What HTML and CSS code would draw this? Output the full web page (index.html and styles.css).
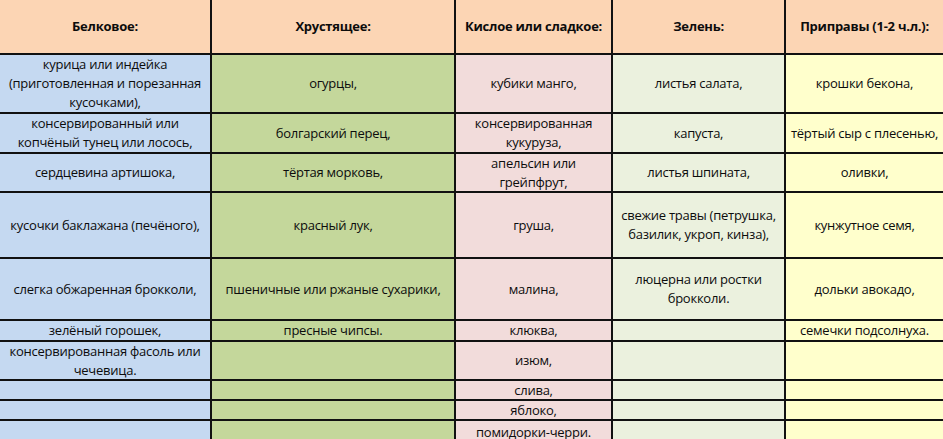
FILE: index.html
```html
<!DOCTYPE html>
<html lang="ru">
<head>
<meta charset="utf-8">
<title>Салат</title>
<link rel="stylesheet" href="styles.css">
</head>
<body>
<div class="sheet">
  <div class="cell head">Белковое:</div>
  <div class="cell head">Хрустящее:</div>
  <div class="cell head">Кислое или сладкое:</div>
  <div class="cell head">Зелень:</div>
  <div class="cell head">Приправы (1-2 ч.л.):</div>

  <div class="cell c1">курица или индейка<br>(приготовленная и порезанная<br>кусочками),</div>
  <div class="cell c2">огурцы,</div>
  <div class="cell c3">кубики манго,</div>
  <div class="cell c4">листья салата,</div>
  <div class="cell c5">крошки бекона,</div>

  <div class="cell c1">консервированный или<br>копчёный тунец или лосось,</div>
  <div class="cell c2">болгарский перец,</div>
  <div class="cell c3">консервированная<br>кукуруза,</div>
  <div class="cell c4">капуста,</div>
  <div class="cell c5">тёртый сыр с плесенью,</div>

  <div class="cell c1">сердцевина артишока,</div>
  <div class="cell c2">тёртая морковь,</div>
  <div class="cell c3">апельсин или<br>грейпфрут,</div>
  <div class="cell c4">листья шпината,</div>
  <div class="cell c5">оливки,</div>

  <div class="cell c1">кусочки баклажана (печёного),</div>
  <div class="cell c2">красный лук,</div>
  <div class="cell c3">груша,</div>
  <div class="cell c4">свежие травы (петрушка,<br>базилик, укроп, кинза),</div>
  <div class="cell c5">кунжутное семя,</div>

  <div class="cell c1">слегка обжаренная брокколи,</div>
  <div class="cell c2">пшеничные или ржаные сухарики,</div>
  <div class="cell c3">малина,</div>
  <div class="cell c4">люцерна или ростки<br>брокколи.</div>
  <div class="cell c5">дольки авокадо,</div>

  <div class="cell c1">зелёный горошек,</div>
  <div class="cell c2">пресные чипсы.</div>
  <div class="cell c3">клюква,</div>
  <div class="cell c4"></div>
  <div class="cell c5">семечки подсолнуха.</div>

  <div class="cell c1">консервированная фасоль или<br>чечевица.</div>
  <div class="cell c2"></div>
  <div class="cell c3">изюм,</div>
  <div class="cell c4"></div>
  <div class="cell c5"></div>

  <div class="cell c1"></div>
  <div class="cell c2"></div>
  <div class="cell c3">слива,</div>
  <div class="cell c4"></div>
  <div class="cell c5"></div>

  <div class="cell c1"></div>
  <div class="cell c2"></div>
  <div class="cell c3">яблоко,</div>
  <div class="cell c4"></div>
  <div class="cell c5"></div>

  <div class="cell c1"></div>
  <div class="cell c2"></div>
  <div class="cell c3">помидорки-черри.</div>
  <div class="cell c4"></div>
  <div class="cell c5"></div>
</div>
</body>
</html>
```
FILE: styles.css
```css
html, body {
  margin: 0;
  padding: 0;
  width: 943px;
  height: 439px;
  overflow: hidden;
  background: #ffffff;
}

.sheet {
  display: grid;
  grid-template-columns: 210px 242px 155px 171px 157px;
  grid-template-rows: 53px 57px 38px 37px 64px 60px 19px 37px 18px 18px 22px;
  gap: 2px;
  background: #111111;
  width: 943px;
  font-family: "Open Sans", "Noto Sans", sans-serif;
  font-size: 13px;
  letter-spacing: -0.25px;
  line-height: 19px;
  color: #0c0c0c;
}

.cell {
  display: flex;
  align-items: center;
  justify-content: center;
  text-align: center;
  white-space: nowrap;
  overflow: visible;
}

.head {
  background: #fcd5b4;
  font-weight: bold;
}

.c1 { background: #c5d9f1; }
.c2 { background: #c4d79b; }
.c3 { background: #f2dcdb; }
.c4 { background: #ebf1de; }
.c5 { background: #ffffcc; }
```
